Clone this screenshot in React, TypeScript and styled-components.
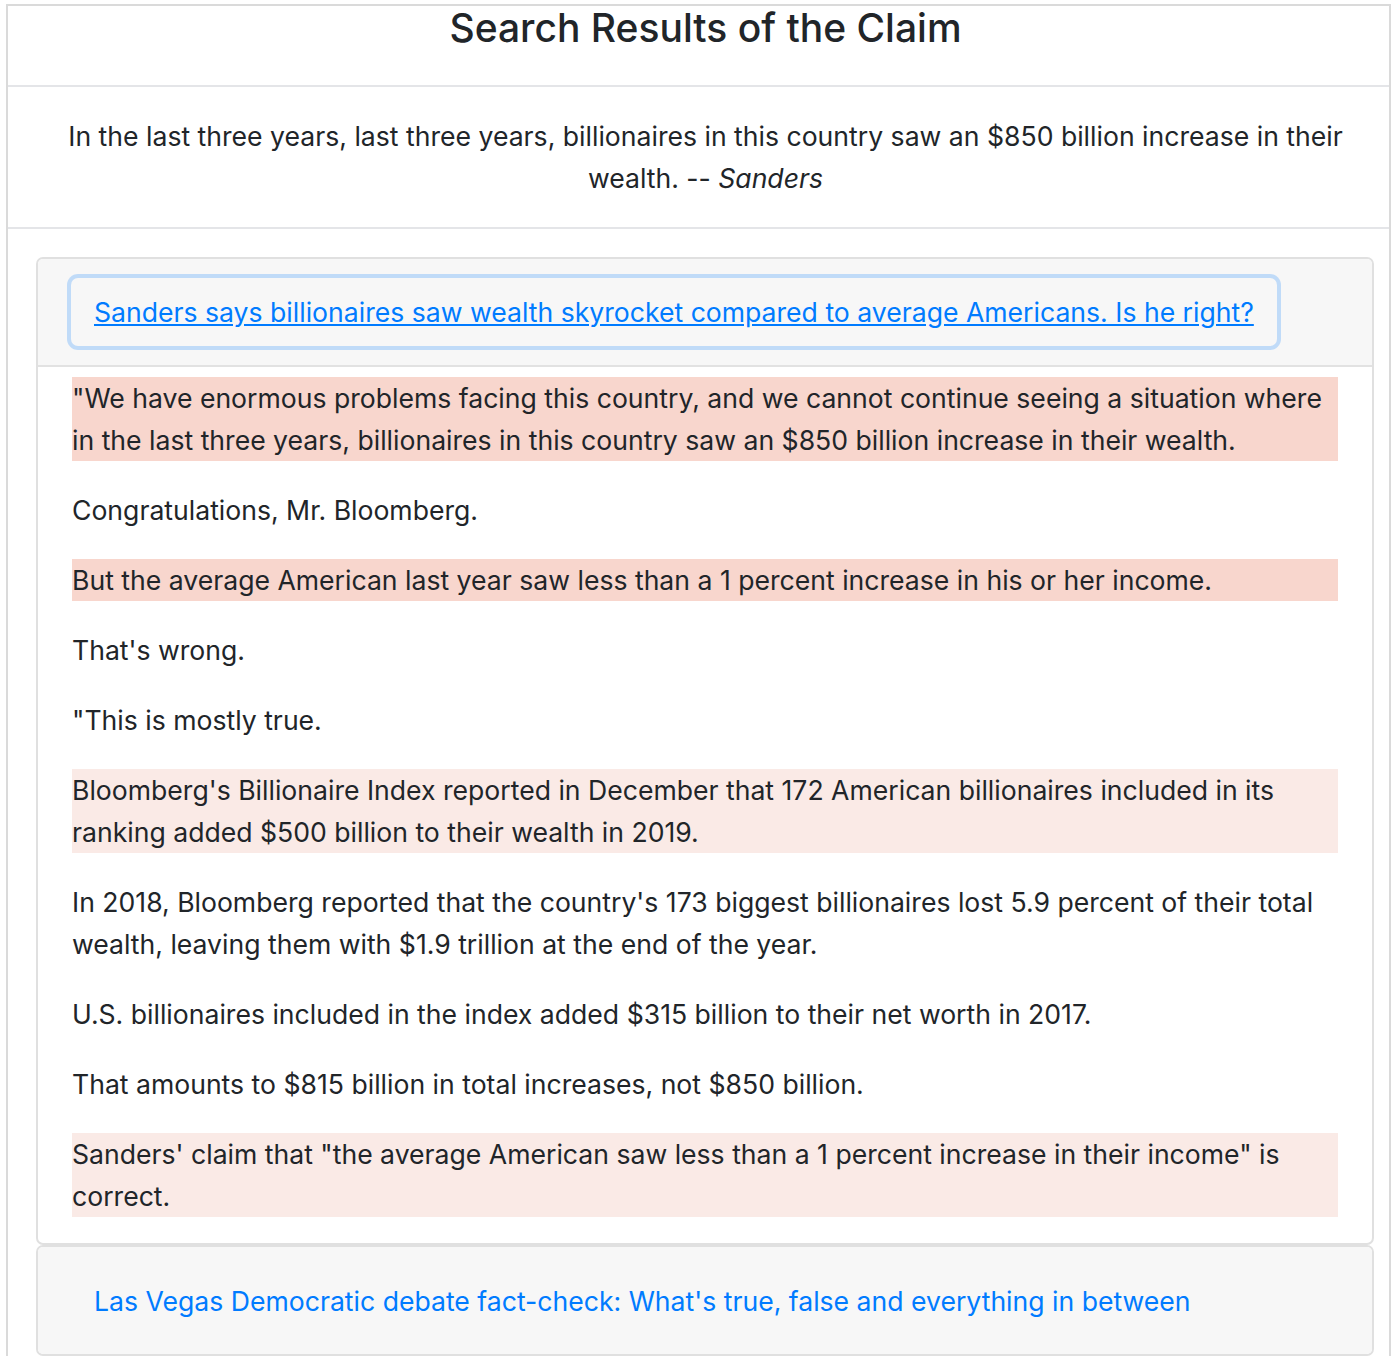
import React from "react";
import styled, { createGlobalStyle, css } from "styled-components";

const GlobalStyle = createGlobalStyle`
  body {
    margin: 0;
    background: #ffffff;
    color: #212529;
    font-family: Inter, "Noto Sans", sans-serif;
  }
`;

type Sentence = {
  text: string;
  tone?: "strong" | "soft";
};

const SENTENCES: Sentence[] = [
  {
    text: "\"We have enormous problems facing this country, and we cannot continue seeing a situation where in the last three years, billionaires in this country saw an $850 billion increase in their wealth.",
    tone: "strong",
  },
  { text: "Congratulations, Mr. Bloomberg." },
  {
    text: "But the average American last year saw less than a 1 percent increase in his or her income.",
    tone: "strong",
  },
  { text: "That's wrong." },
  { text: "\"This is mostly true." },
  {
    text: "Bloomberg's Billionaire Index reported in December that 172 American billionaires included in its ranking added $500 billion to their wealth in 2019.",
    tone: "soft",
  },
  {
    text: "In 2018, Bloomberg reported that the country's 173 biggest billionaires lost 5.9 percent of their total wealth, leaving them with $1.9 trillion at the end of the year.",
  },
  {
    text: "U.S. billionaires included in the index added $315 billion to their net worth in 2017.",
  },
  { text: "That amounts to $815 billion in total increases, not $850 billion." },
  {
    text: "Sanders' claim that \"the average American saw less than a 1 percent increase in their income\" is correct.",
    tone: "soft",
  },
];

export default function App() {
  return (
    <>
      <GlobalStyle />
      <S.Page>
        <S.Card>
          <S.Header>
            <S.Title>Search Results of the Claim</S.Title>
          </S.Header>
          <S.Claim>
            In the last three years, last three years, billionaires in this
            country saw an $850 billion increase in their wealth. --{" "}
            <S.Speaker>Sanders</S.Speaker>
          </S.Claim>
          <S.Results>
            <S.Result>
              <S.ResultHeader>
                <S.ToggleButton $active>
                  Sanders says billionaires saw wealth skyrocket compared to
                  average Americans. Is he right?
                </S.ToggleButton>
              </S.ResultHeader>
              <S.ResultBody>
                {SENTENCES.map((sentence, index) => (
                  <S.Sentence key={index} $tone={sentence.tone}>
                    {sentence.text}
                  </S.Sentence>
                ))}
              </S.ResultBody>
            </S.Result>
            <S.Result>
              <S.ResultHeader $closed>
                <S.ToggleButton>
                  Las Vegas Democratic debate fact-check: What's true, false
                  and everything in between
                </S.ToggleButton>
              </S.ResultHeader>
            </S.Result>
          </S.Results>
        </S.Card>
      </S.Page>
    </>
  );
}

const S = {
  Page: styled.div`
    padding: 4px 7px 0 6px;
  `,

  Card: styled.div`
    border: 2px solid #dadada;
    border-bottom: none;
    background: #ffffff;
  `,

  Header: styled.header`
    height: 79px;
    display: flex;
    justify-content: center;
    padding-left: 14px;
    border-bottom: 2px solid #e4e5e8;
  `,

  Title: styled.h1`
    margin: 0;
    font-size: 39px;
    font-weight: 500;
    line-height: 44px;
    color: #212529;
  `,

  Claim: styled.p`
    margin: 0;
    padding: 28px 36px 28px 50px;
    text-align: center;
    font-size: 26.6px;
    line-height: 42px;
    border-bottom: 2px solid #e4e5e8;
  `,

  Speaker: styled.em`
    font-style: italic;
  `,

  Results: styled.div`
    padding: 28px 15px 0 28px;
  `,

  Result: styled.section`
    border: 2px solid #e0e0e0;
    border-radius: 7px;
    overflow: hidden;
  `,

  ResultHeader: styled.div<{ $closed?: boolean }>`
    background: #f7f7f7;
    padding: ${(p) => (p.$closed ? "20px 33px 19px" : "19px 33px")};
    border-bottom: ${(p) => (p.$closed ? "none" : "2px solid #e2e2e2")};
  `,

  ToggleButton: styled.button<{ $active?: boolean }>`
    display: inline-block;
    margin: 0;
    padding: 11px 21px;
    border: 2px solid transparent;
    border-radius: 7px;
    background: transparent;
    font-family: inherit;
    font-size: 26.6px;
    line-height: 42px;
    color: #007bff;
    text-align: left;
    cursor: pointer;
    ${(p) =>
      p.$active &&
      css`
        text-decoration: underline;
        box-shadow: 0 0 0 4px rgba(0, 123, 255, 0.22);
      `}
  `,

  ResultBody: styled.div`
    padding: 10px 34px 0;
    background: #ffffff;
  `,

  Sentence: styled.p<{ $tone?: "strong" | "soft" }>`
    margin: 0 0 28px;
    font-size: 26.6px;
    line-height: 42px;
    color: #212529;
    background: ${(p) =>
      p.$tone === "strong"
        ? "#f8d6cd"
        : p.$tone === "soft"
        ? "#faeae6"
        : "transparent"};

    &:last-child {
      margin-bottom: 26px;
    }
  `,
};
